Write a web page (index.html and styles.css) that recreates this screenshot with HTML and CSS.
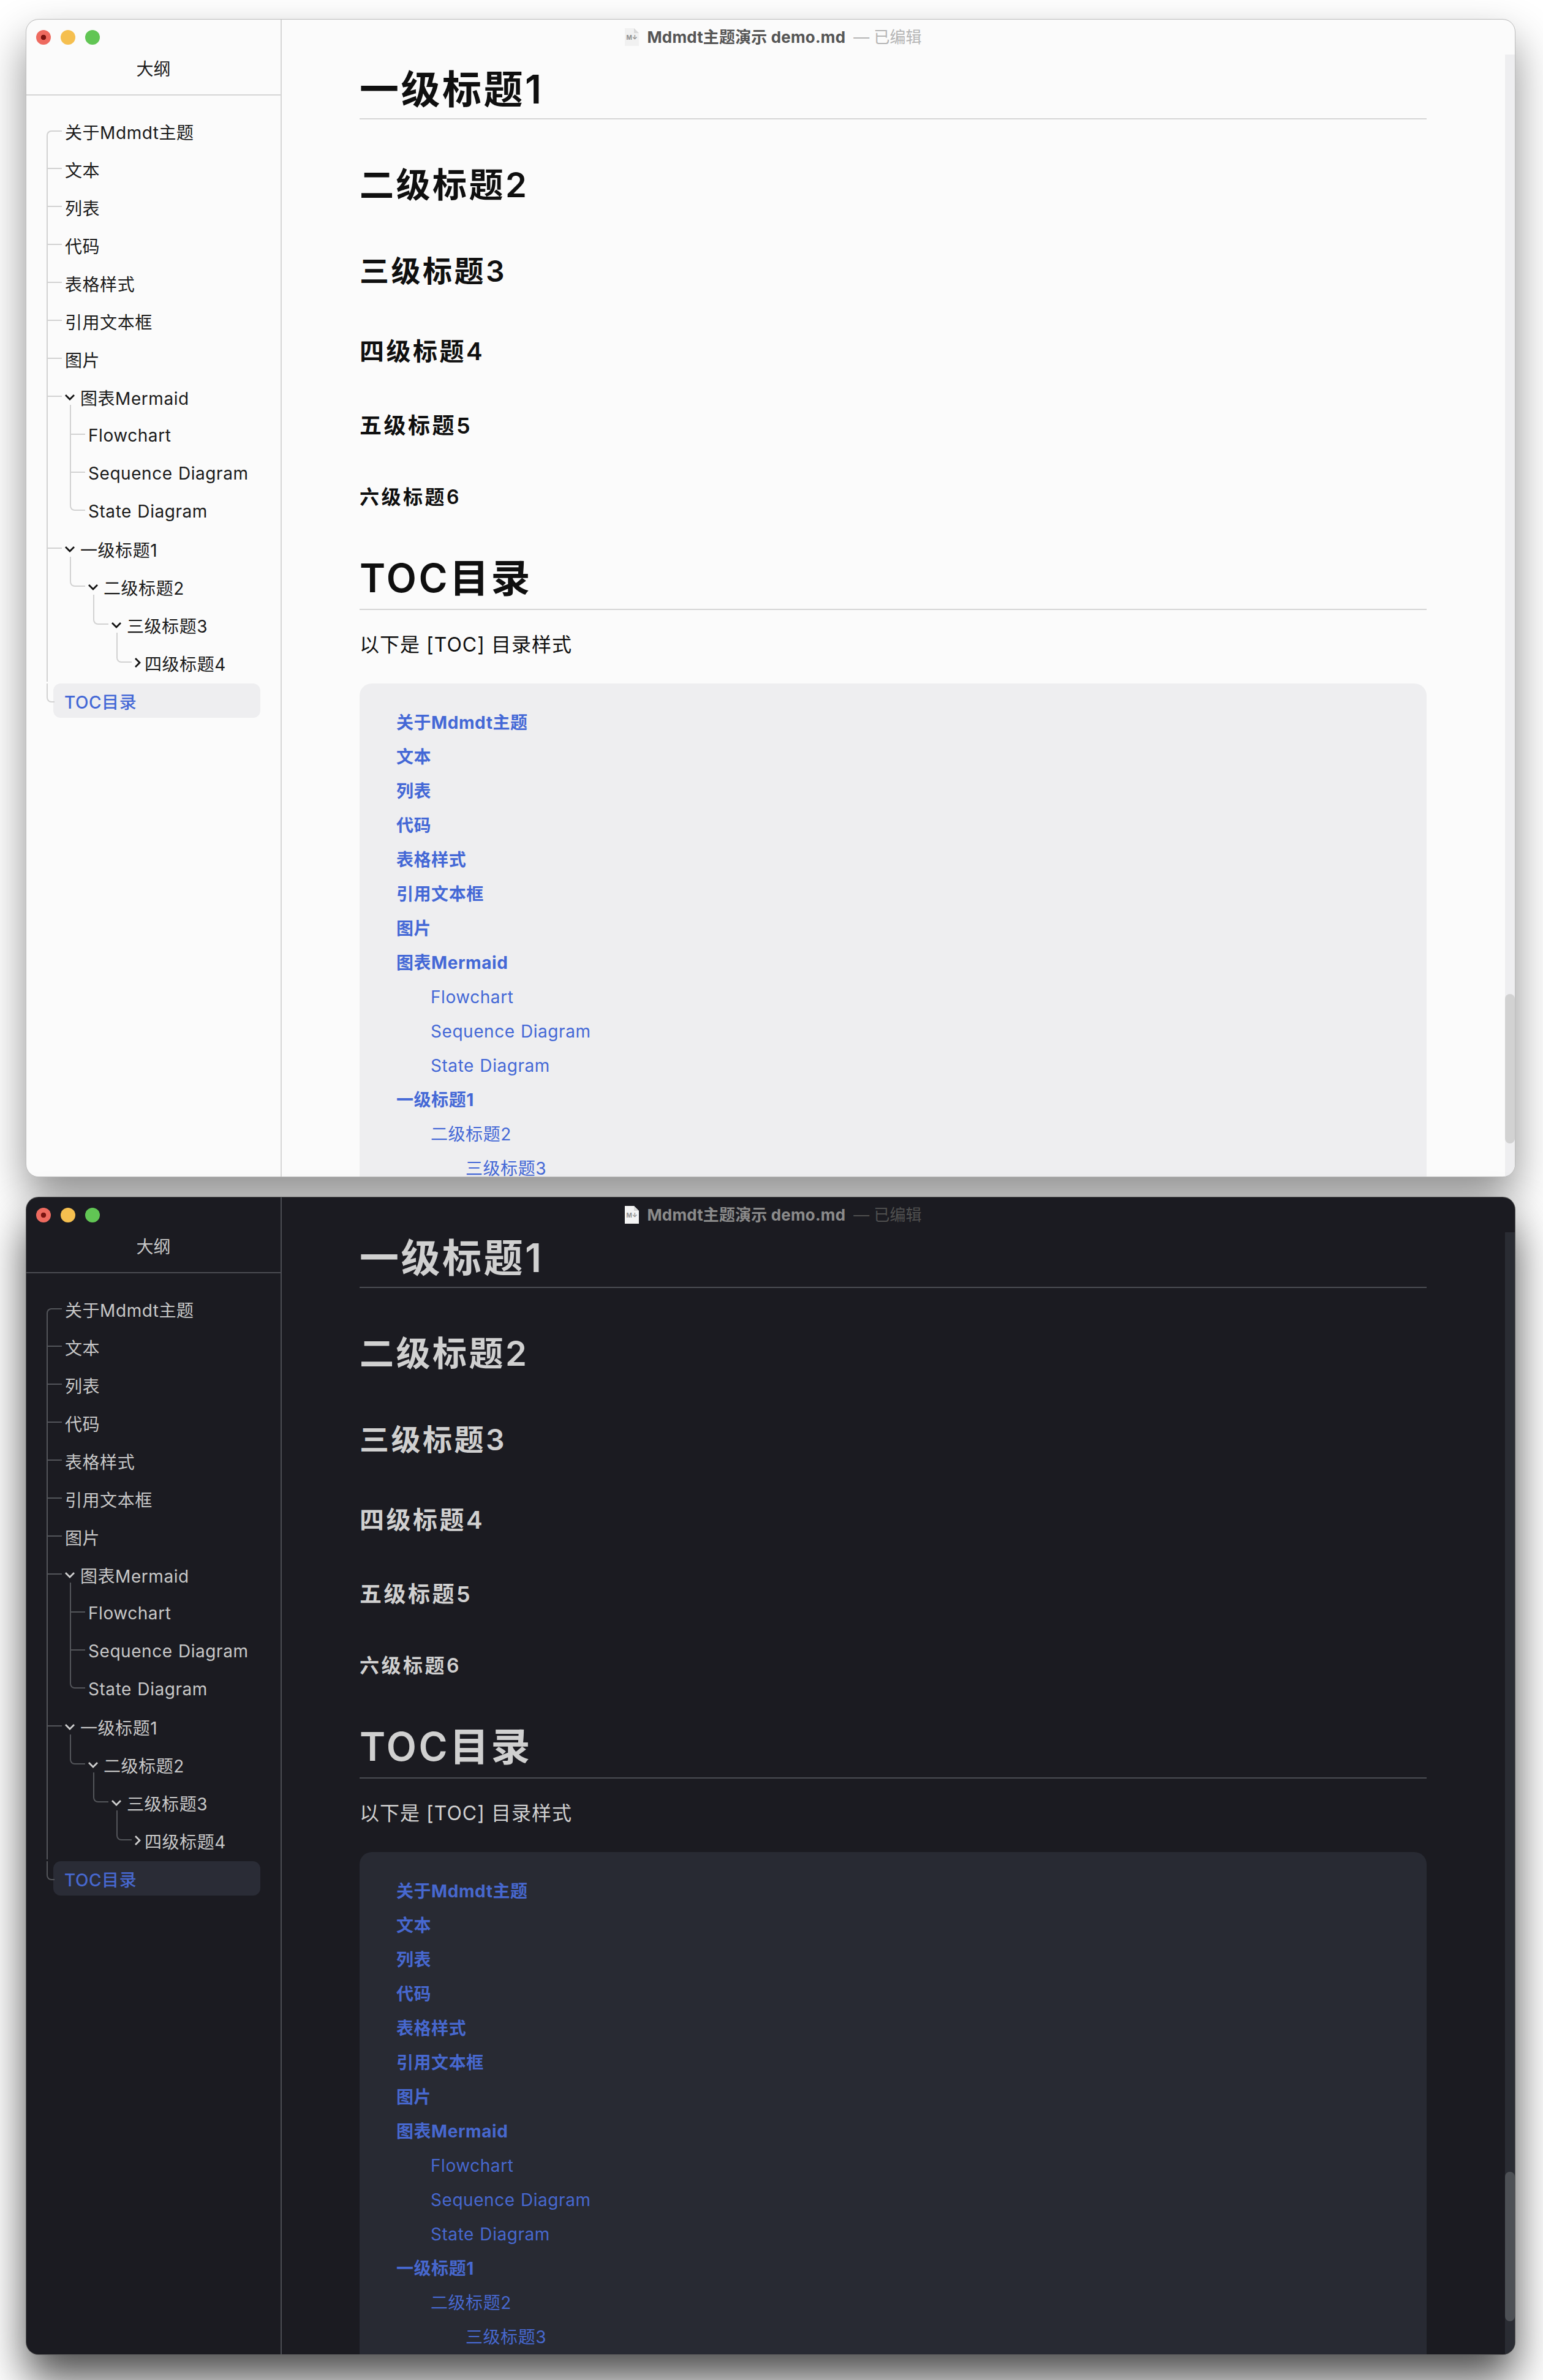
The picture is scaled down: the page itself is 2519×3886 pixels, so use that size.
FILE: index.html
```html
<!DOCTYPE html>
<html lang="zh-CN">
<head>
    <meta charset="UTF-8">
    <meta name="viewport" content="width=device-width, initial-scale=1.0">
    <title>Mdmdt主题演示 demo.md</title>
    <link rel="stylesheet" href="styles.css">
</head>
<body>
    <div class="stack">

        <!-- 浅色窗口 -->
        <div class="window light">
            <div class="lights">
                <span class="light-dot close"></span>
                <span class="light-dot min"></span>
                <span class="light-dot max"></span>
            </div>
            <div class="titlebar">
                <svg class="file-icon" viewBox="0 0 24 29">
                    <path class="file-sheet" d="M1 0H16L24 8V29H1Z"/>
                    <path class="file-fold" d="M16 0V8H24Z"/>
                    <text class="file-mark" x="3.5" y="19">M↓</text>
                </svg>
                <span class="doc-name">Mdmdt主题演示 demo.md</span>
                <span class="doc-state">— 已编辑</span>
            </div>
            <aside class="sidebar">
                <div class="sidebar-title">大纲</div>
                <ul class="tree">
                    <li><div class="row">关于Mdmdt主题</div></li>
                    <li><div class="row">文本</div></li>
                    <li><div class="row">列表</div></li>
                    <li><div class="row">代码</div></li>
                    <li><div class="row">表格样式</div></li>
                    <li><div class="row">引用文本框</div></li>
                    <li><div class="row">图片</div></li>
                    <li>
                        <div class="row"><svg class="caret" viewBox="0 0 18 18"><path d="M2 6l7 7 7-7"/></svg>图表Mermaid</div>
                        <ul>
                            <li><div class="row">Flowchart</div></li>
                            <li><div class="row">Sequence Diagram</div></li>
                            <li><div class="row">State Diagram</div></li>
                        </ul>
                    </li>
                    <li>
                        <div class="row"><svg class="caret" viewBox="0 0 18 18"><path d="M2 6l7 7 7-7"/></svg>一级标题1</div>
                        <ul>
                            <li>
                                <div class="row"><svg class="caret" viewBox="0 0 18 18"><path d="M2 6l7 7 7-7"/></svg>二级标题2</div>
                                <ul>
                                    <li>
                                        <div class="row"><svg class="caret" viewBox="0 0 18 18"><path d="M2 6l7 7 7-7"/></svg>三级标题3</div>
                                        <ul>
                                            <li><div class="row"><svg class="caret shut" viewBox="0 0 11 18"><path d="M2 2l7 7-7 7"/></svg>四级标题4</div></li>
                                        </ul>
                                    </li>
                                </ul>
                            </li>
                        </ul>
                    </li>
                    <li class="current"><div class="row">TOC目录</div></li>
                </ul>
            </aside>
            <main class="doc">
                <h1>一级标题1</h1>
                <h2>二级标题2</h2>
                <h3>三级标题3</h3>
                <h4>四级标题4</h4>
                <h5>五级标题5</h5>
                <h6>六级标题6</h6>
                <h1 class="toc-heading">TOC目录</h1>
                <p>以下是 [TOC] 目录样式</p>
                <div class="toc">
                    <a class="toc-1">关于Mdmdt主题</a>
                    <a class="toc-1">文本</a>
                    <a class="toc-1">列表</a>
                    <a class="toc-1">代码</a>
                    <a class="toc-1">表格样式</a>
                    <a class="toc-1">引用文本框</a>
                    <a class="toc-1">图片</a>
                    <a class="toc-1">图表Mermaid</a>
                    <a class="toc-2">Flowchart</a>
                    <a class="toc-2">Sequence Diagram</a>
                    <a class="toc-2">State Diagram</a>
                    <a class="toc-1">一级标题1</a>
                    <a class="toc-2">二级标题2</a>
                    <a class="toc-3">三级标题3</a>
                </div>
            </main>
            <div class="scroll-track"><div class="scroll-thumb"></div></div>
        </div>

        <!-- 深色窗口 -->
        <div class="window dark">
            <div class="lights">
                <span class="light-dot close"></span>
                <span class="light-dot min"></span>
                <span class="light-dot max"></span>
            </div>
            <div class="titlebar">
                <svg class="file-icon" viewBox="0 0 24 29">
                    <path class="file-sheet" d="M1 0H16L24 8V29H1Z"/>
                    <path class="file-fold" d="M16 0V8H24Z"/>
                    <text class="file-mark" x="3.5" y="19">M↓</text>
                </svg>
                <span class="doc-name">Mdmdt主题演示 demo.md</span>
                <span class="doc-state">— 已编辑</span>
            </div>
            <aside class="sidebar">
                <div class="sidebar-title">大纲</div>
                <ul class="tree">
                    <li><div class="row">关于Mdmdt主题</div></li>
                    <li><div class="row">文本</div></li>
                    <li><div class="row">列表</div></li>
                    <li><div class="row">代码</div></li>
                    <li><div class="row">表格样式</div></li>
                    <li><div class="row">引用文本框</div></li>
                    <li><div class="row">图片</div></li>
                    <li>
                        <div class="row"><svg class="caret" viewBox="0 0 18 18"><path d="M2 6l7 7 7-7"/></svg>图表Mermaid</div>
                        <ul>
                            <li><div class="row">Flowchart</div></li>
                            <li><div class="row">Sequence Diagram</div></li>
                            <li><div class="row">State Diagram</div></li>
                        </ul>
                    </li>
                    <li>
                        <div class="row"><svg class="caret" viewBox="0 0 18 18"><path d="M2 6l7 7 7-7"/></svg>一级标题1</div>
                        <ul>
                            <li>
                                <div class="row"><svg class="caret" viewBox="0 0 18 18"><path d="M2 6l7 7 7-7"/></svg>二级标题2</div>
                                <ul>
                                    <li>
                                        <div class="row"><svg class="caret" viewBox="0 0 18 18"><path d="M2 6l7 7 7-7"/></svg>三级标题3</div>
                                        <ul>
                                            <li><div class="row"><svg class="caret shut" viewBox="0 0 11 18"><path d="M2 2l7 7-7 7"/></svg>四级标题4</div></li>
                                        </ul>
                                    </li>
                                </ul>
                            </li>
                        </ul>
                    </li>
                    <li class="current"><div class="row">TOC目录</div></li>
                </ul>
            </aside>
            <main class="doc">
                <h1>一级标题1</h1>
                <h2>二级标题2</h2>
                <h3>三级标题3</h3>
                <h4>四级标题4</h4>
                <h5>五级标题5</h5>
                <h6>六级标题6</h6>
                <h1 class="toc-heading">TOC目录</h1>
                <p>以下是 [TOC] 目录样式</p>
                <div class="toc">
                    <a class="toc-1">关于Mdmdt主题</a>
                    <a class="toc-1">文本</a>
                    <a class="toc-1">列表</a>
                    <a class="toc-1">代码</a>
                    <a class="toc-1">表格样式</a>
                    <a class="toc-1">引用文本框</a>
                    <a class="toc-1">图片</a>
                    <a class="toc-1">图表Mermaid</a>
                    <a class="toc-2">Flowchart</a>
                    <a class="toc-2">Sequence Diagram</a>
                    <a class="toc-2">State Diagram</a>
                    <a class="toc-1">一级标题1</a>
                    <a class="toc-2">二级标题2</a>
                    <a class="toc-3">三级标题3</a>
                </div>
            </main>
            <div class="scroll-track"><div class="scroll-thumb"></div></div>
        </div>

    </div>
</body>
</html>
```

FILE: styles.css
```css
html, body {
    margin: 0;
    padding: 0;
    height: 3886px;
    overflow: hidden;
    background-color: #fff;
    font-family: Inter, "Noto Sans CJK SC", sans-serif;
}
.stack {
    display: flex;
    flex-direction: column;
    gap: 34px;
    padding: 32px 46px 0 43px;
}

/* 两个窗口共用一套结构，颜色走变量 */
.light {
    --bg: #fbfbfb;
    --text: #0f0f0f;
    --side-text: #1a1a1a;
    --line: #d6d6d6;
    --tree-line: #d2d2d2;
    --caret: #111;
    --current: #eeeef0;
    --link: #4468d6;
    --code-bg: #eeeef0;
    --track: #eeeef0;
    --thumb: #d2d2d2;
    --title: #555;
    --state: #b5b5b5;
    --edge: #bdbdbd;
    --sheet: #f1f1f1;
    --doc-top: 72px;
    --shadow: 0 34px 70px rgba(0, 0, 0, 0.45);
}
.dark {
    --bg: #1b1b21;
    --text: #d0d0d0;
    --side-text: #c8c8c8;
    --line: #4a4c52;
    --tree-line: #53555a;
    --caret: #cfcfcf;
    --current: #2a2c36;
    --link: #4768cf;
    --code-bg: #282a33;
    --track: #2a2c33;
    --thumb: #4d5055;
    --title: #8b8b8b;
    --state: #4f4f4f;
    --edge: #5a5a5a;
    --sheet: #f4f4f4;
    --doc-top: 57px;
    --shadow: 0 40px 70px rgba(0, 0, 0, 0.7);
}

.window {
    position: relative;
    display: flex;
    height: 1889px;
    overflow: hidden;
    background-color: var(--bg);
    border-radius: 20px;
    box-shadow: 0 0 0 1px var(--edge), var(--shadow);
    color: var(--text);
}
.lights {
    position: absolute;
    top: 17px;
    left: 16px;
    display: flex;
    gap: 16px;
}
.light-dot {
    width: 24px;
    height: 24px;
    border-radius: 50%;
}
.close {
    background: radial-gradient(circle, #7a1410 0 4px, #ee6a5f 4.6px);
}
.min {
    background-color: #f5bf4f;
}
.max {
    background-color: #61c554;
}
.titlebar {
    position: absolute;
    top: 12px;
    left: 0;
    right: 0;
    display: flex;
    justify-content: center;
    align-items: center;
    gap: 13px;
    height: 29px;
    padding-left: 8px;
    font-size: 26px;
    white-space: nowrap;
}
.file-icon {
    width: 24px;
    height: 29px;
    margin-top: 4px;
}
.file-sheet {
    fill: var(--sheet);
}
.file-fold {
    fill: #d8d8d8;
}
.file-mark {
    font-size: 10px;
    font-weight: 700;
    fill: #8f8f8f;
}
.doc-name {
    color: var(--title);
    font-weight: 700;
    letter-spacing: 0.15px;
}
.doc-state {
    color: var(--state);
}

/* 左侧大纲 */
.sidebar {
    flex: none;
    width: 415px;
    border-right: 2px solid var(--line);
}
.sidebar-title {
    height: 124px;
    padding-top: 60px;
    box-sizing: border-box;
    line-height: 42px;
    text-align: center;
    font-size: 28px;
    color: var(--side-text);
    border-bottom: 2px solid var(--line);
}
.tree, .tree ul {
    list-style: none;
    margin: 0;
    padding: 0;
}
.tree {
    margin: 27px 0 0 33px;
}
.tree ul {
    margin-left: 8px;
}
.tree li {
    position: relative;
    padding-left: 30px;
}
.tree li::before {
    content: "";
    position: absolute;
    top: 0;
    left: 0;
    width: 23px;
    height: 29px;
    border-left: 2px solid var(--tree-line);
    border-bottom: 2px solid var(--tree-line);
    box-sizing: content-box;
}
.tree li:last-child::before {
    border-bottom-left-radius: 8px;
}
.tree li:not(:last-child)::after {
    content: "";
    position: absolute;
    top: 0;
    bottom: 0;
    left: 0;
    border-left: 2px solid var(--tree-line);
}
/* 子级的竖线从上一行的箭头下方开始 */
.tree ul > li:first-child::before {
    top: -18px;
    height: 47px;
}
.tree > li:first-child::before {
    top: 30px;
    height: 32px;
    border-bottom: none;
    border-top: 2px solid var(--tree-line);
    border-radius: 8px 0 0 0;
}
.tree > li:first-child::after {
    top: 38px;
}
.row {
    display: flex;
    align-items: center;
    height: 62px;
    padding-top: 2px;
    box-sizing: border-box;
    font-size: 28px;
    letter-spacing: 0.55px;
    word-spacing: 1px;
    color: var(--side-text);
    white-space: nowrap;
}
.caret {
    flex: none;
    width: 18px;
    height: 18px;
    margin: -2px 8px 0 -1px;
    fill: none;
    stroke: var(--caret);
    stroke-width: 2.8;
}
.caret.shut {
    width: 11px;
    margin: -2px 6px 0 -1px;
}
.tree li.current {
    padding-left: 11px;
}
.tree li.current::before {
    width: 11px;
}
.current .row {
    height: 56px;
    margin: 3px 0;
    width: 338px;
    padding-left: 18px;
    border-radius: 12px;
    background-color: var(--current);
    color: var(--link);
    font-weight: 500;
}

/* 右侧文档 */
.doc {
    flex: 1;
    min-width: 0;
    padding: var(--doc-top) 144px 0 127px;
}
.doc h1, .doc h2, .doc h3, .doc h4, .doc h5, .doc h6, .doc p {
    margin: 0;
    letter-spacing: 3.5px;
    font-weight: 600;
}
.doc h1 {
    font-size: 64px;
    line-height: 80px;
    padding: 2px 0 7px;
    border-bottom: 2px solid var(--line);
}
.doc h2 {
    margin-top: 71px;
    font-size: 56px;
    line-height: 72px;
}
.doc h3 {
    margin-top: 73px;
    font-size: 48px;
    line-height: 64px;
}
.doc h4 {
    margin-top: 71px;
    font-size: 40px;
    line-height: 56px;
}
.doc h5 {
    margin-top: 68px;
    font-size: 36px;
    line-height: 50px;
}
.doc h6 {
    margin-top: 70px;
    font-size: 32px;
    line-height: 44px;
}
.doc .toc-heading {
    margin-top: 70px;
    padding: 0 0 10px;
}
.doc p {
    margin-top: 33px;
    font-size: 32px;
    font-weight: 400;
    letter-spacing: 1px;
    line-height: 48px;
}
.toc {
    margin-top: 39px;
    padding: 36px 60px 0;
    background-color: var(--code-bg);
    border-radius: 20px 20px 0 0;
}
.toc a {
    display: block;
    height: 56px;
    line-height: 56px;
    font-size: 28px;
    letter-spacing: 0.55px;
    word-spacing: 1px;
    color: var(--link);
}
.toc-1 {
    font-weight: 700;
}
.toc-2 {
    padding-left: 56px;
}
.toc-3 {
    padding-left: 113px;
}

.scroll-track {
    position: absolute;
    top: 57px;
    right: 0;
    bottom: 0;
    width: 16px;
    background-color: var(--track);
}
.scroll-thumb {
    margin-top: 1534px;
    height: 244px;
    border-radius: 8px;
    background-color: var(--thumb);
}
```
